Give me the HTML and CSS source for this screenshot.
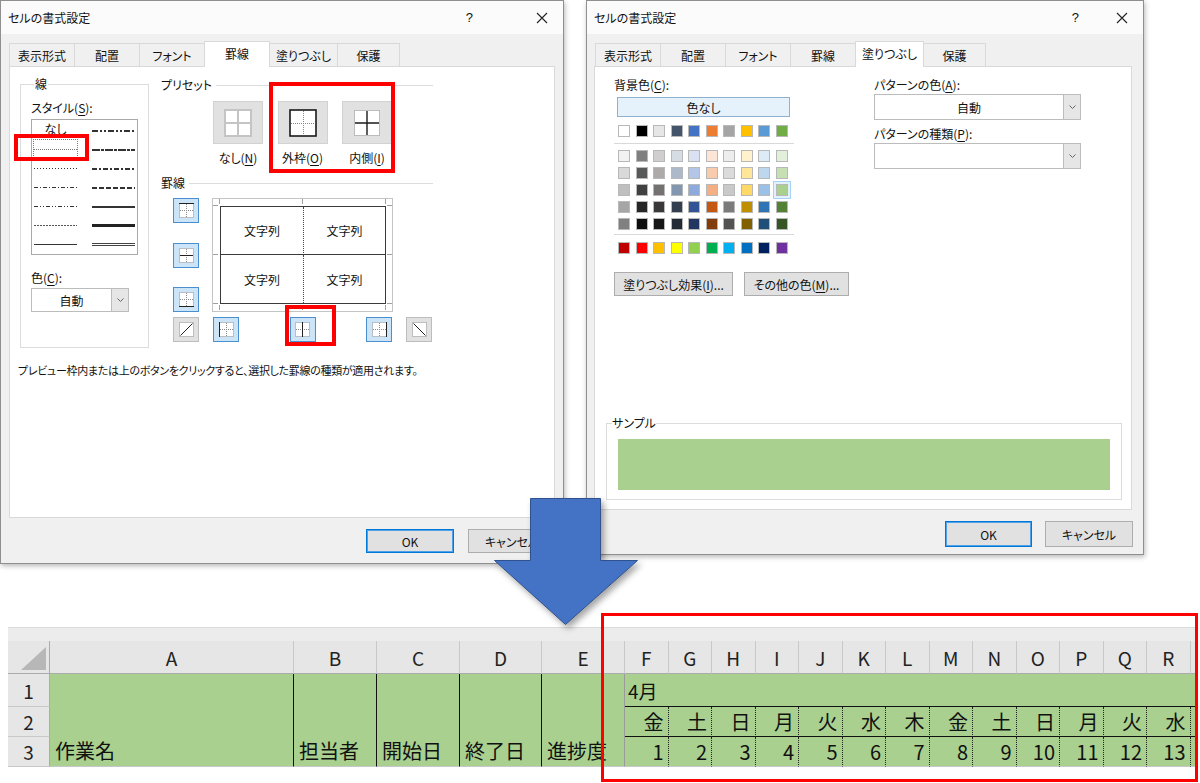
FILE: index.html
```html
<!DOCTYPE html>
<html lang="ja">
<head>
<meta charset="utf-8">
<title>セルの書式設定</title>
<link rel="stylesheet" href="styles.css">
</head>
<body>
<main class="canvas">

<!-- Left dialog: 罫線 tab -->
<section class="dialog dlg-left">
  <header class="titlebar">
    <span class="title">セルの書式設定</span>
    <span class="tb-help">?</span>
    <span class="tb-close"><svg width="12" height="12" viewBox="0 0 12 12"><path d="M1 1L11 11M11 1L1 11" stroke="#222" stroke-width="1.1"/></svg></span>
  </header>
  <nav class="tabs">
    <span class="tab">表示形式</span>
    <span class="tab">配置</span>
    <span class="tab">フォント</span>
    <span class="tab active">罫線</span>
    <span class="tab wide">塗りつぶし</span>
    <span class="tab narrow">保護</span>
  </nav>
  <div class="panel panel-border">
    <div class="border-body">
      <div class="group line-group">
        <span class="group-label">線</span>
        <div class="field-label style-label">スタイル(<u>S</u>):</div>
        <div class="style-list">
          <div class="style-item style-none">なし</div>
          <div class="style-item"><svg class="ls" viewBox="0 0 43 5"><line x1="0" y1="3" x2="43" y2="3" stroke="#333" stroke-width="2" stroke-dasharray="6 2 2 2 2 2"/></svg></div>
          <div class="style-item selected"><svg class="ls" viewBox="0 0 43 5"><line x1="0" y1="2.5" x2="43" y2="2.5" stroke="#777" stroke-dasharray="1 1"/></svg></div>
          <div class="style-item"><svg class="ls" viewBox="0 0 43 5"><line x1="0" y1="3" x2="43" y2="3" stroke="#333" stroke-width="2" stroke-dasharray="8 1 3 1"/></svg></div>
          <div class="style-item"><svg class="ls" viewBox="0 0 43 5"><line x1="0" y1="2.5" x2="43" y2="2.5" stroke="#333" stroke-dasharray="1 2"/></svg></div>
          <div class="style-item"><svg class="ls" viewBox="0 0 43 5"><line x1="0" y1="3" x2="43" y2="3" stroke="#333" stroke-width="2" stroke-dasharray="5 2 2 2"/></svg></div>
          <div class="style-item"><svg class="ls" viewBox="0 0 43 5"><line x1="0" y1="2.5" x2="43" y2="2.5" stroke="#333" stroke-dasharray="4 2 1 2"/></svg></div>
          <div class="style-item"><svg class="ls" viewBox="0 0 43 5"><line x1="0" y1="3" x2="43" y2="3" stroke="#333" stroke-width="2" stroke-dasharray="5 2"/></svg></div>
          <div class="style-item"><svg class="ls" viewBox="0 0 43 5"><line x1="0" y1="2.5" x2="43" y2="2.5" stroke="#333" stroke-dasharray="4 2 1 2 1 2"/></svg></div>
          <div class="style-item"><svg class="ls" viewBox="0 0 43 5"><line x1="0" y1="3" x2="43" y2="3" stroke="#333" stroke-width="2"/></svg></div>
          <div class="style-item"><svg class="ls" viewBox="0 0 43 5"><line x1="0" y1="2.5" x2="43" y2="2.5" stroke="#555" stroke-dasharray="2 1"/></svg></div>
          <div class="style-item"><svg class="ls" viewBox="0 0 43 5"><line x1="0" y1="2.5" x2="43" y2="2.5" stroke="#222" stroke-width="3"/></svg></div>
          <div class="style-item"><svg class="ls" viewBox="0 0 43 5"><line x1="0" y1="2.5" x2="43" y2="2.5" stroke="#333"/></svg></div>
          <div class="style-item"><svg class="ls" viewBox="0 0 43 5"><line x1="0" y1="1.5" x2="43" y2="1.5" stroke="#444"/><line x1="0" y1="3.5" x2="43" y2="3.5" stroke="#444"/></svg></div>
        </div>
        <div class="field-label color-label">色(<u>C</u>):</div>
        <div class="combo combo-small">
          <span class="combo-val">自動</span>
          <span class="combo-arrow"><svg width="7" height="4" viewBox="0 0 7 4"><path d="M0.5 0.5L3.5 3.5L6.5 0.5" fill="none" stroke="#666"/></svg></span>
        </div>
      </div>

      <div class="border-right">
        <div class="section-head"><span>プリセット</span></div>
        <div class="presets">
          <div class="preset">
            <span class="preset-btn"><svg width="28" height="28" viewBox="0 0 28 28"><rect x="1" y="1" width="26" height="26" fill="#fff" stroke="#c4c4c4" stroke-width="2"/><path d="M14 1V27M1 14H27" stroke="#c4c4c4" stroke-width="2"/></svg></span>
            <span class="preset-label">なし(<u>N</u>)</span>
          </div>
          <div class="preset">
            <span class="preset-btn"><svg width="28" height="28" viewBox="0 0 28 28"><rect x="1" y="1" width="26" height="26" fill="#fff" stroke="#1a1a1a" stroke-width="1.6"/><path d="M14.5 2V26M2 14.5H26" stroke="#888" stroke-dasharray="1 1"/></svg></span>
            <span class="preset-label">外枠(<u>O</u>)</span>
          </div>
          <div class="preset">
            <span class="preset-btn"><svg width="28" height="28" viewBox="0 0 28 28"><rect x="1.5" y="1.5" width="25" height="25" fill="#fff" stroke="#888" stroke-dasharray="1 1"/><path d="M14 2V26M2 14H26" stroke="#1a1a1a" stroke-width="1.4"/></svg></span>
            <span class="preset-label">内側(<u>I</u>)</span>
          </div>
        </div>

        <div class="section-head head-border"><span>罫線</span></div>
        <div class="editor">
          <div class="side-btns">
            <span class="bb on"><svg width="15" height="15" viewBox="0 0 15 15"><rect x="0.5" y="0.5" width="14" height="14" fill="#fff" stroke="#8c8c8c" stroke-dasharray="1 1"/><path d="M7.5 1V14M1 7.5H14" stroke="#8c8c8c" stroke-dasharray="1 1"/><path d="M0 0.5H15" stroke="#222"/></svg></span>
            <span class="bb on"><svg width="15" height="15" viewBox="0 0 15 15"><rect x="0.5" y="0.5" width="14" height="14" fill="#fff" stroke="#8c8c8c" stroke-dasharray="1 1"/><path d="M7.5 1V14" stroke="#8c8c8c" stroke-dasharray="1 1"/><path d="M1 7.5H14" stroke="#222"/></svg></span>
            <span class="bb on"><svg width="15" height="15" viewBox="0 0 15 15"><rect x="0.5" y="0.5" width="14" height="14" fill="#fff" stroke="#8c8c8c" stroke-dasharray="1 1"/><path d="M7.5 1V14M1 7.5H14" stroke="#8c8c8c" stroke-dasharray="1 1"/><path d="M0 14.5H15" stroke="#222"/></svg></span>
          </div>
          <div class="preview">
            <svg class="ticks" width="181" height="114" viewBox="0 0 181 114"><path d="M7.5 1V6M90.5 1V6M173.5 1V6M7.5 107V112M90.5 107V112M173.5 107V112M1 7.5H6M1 56.5H6M1 105.5H6M175 7.5H180M175 56.5H180M175 105.5H180" stroke="#a0a0a0"/></svg>
            <div class="pv-grid">
              <span class="pv-cell c1">文字列</span>
              <span class="pv-cell c2">文字列</span>
              <span class="pv-cell c3">文字列</span>
              <span class="pv-cell c4">文字列</span>
            </div>
          </div>
        </div>
        <div class="bottom-btns">
          <div class="bgroup">
            <span class="bb off"><svg width="15" height="15" viewBox="0 0 15 15"><rect x="0.5" y="0.5" width="14" height="14" fill="#fff" stroke="#8c8c8c" stroke-dasharray="1 1"/><path d="M1.5 13.5L13.5 1.5" stroke="#222"/></svg></span>
            <span class="bb on"><svg width="15" height="15" viewBox="0 0 15 15"><rect x="0.5" y="0.5" width="14" height="14" fill="#fff" stroke="#8c8c8c" stroke-dasharray="1 1"/><path d="M7.5 1V14M1 7.5H14" stroke="#8c8c8c" stroke-dasharray="1 1"/><path d="M0.5 0V15" stroke="#222"/></svg></span>
          </div>
          <span class="bb on"><svg width="15" height="15" viewBox="0 0 15 15"><rect x="0.5" y="0.5" width="14" height="14" fill="#fff" stroke="#8c8c8c" stroke-dasharray="1 1"/><path d="M1 7.5H14" stroke="#8c8c8c" stroke-dasharray="1 1"/><path d="M7.5 0V15" stroke="#222"/></svg></span>
          <div class="bgroup">
            <span class="bb on"><svg width="15" height="15" viewBox="0 0 15 15"><rect x="0.5" y="0.5" width="14" height="14" fill="#fff" stroke="#8c8c8c" stroke-dasharray="1 1"/><path d="M7.5 1V14M1 7.5H14" stroke="#8c8c8c" stroke-dasharray="1 1"/><path d="M14.5 0V15" stroke="#222"/></svg></span>
            <span class="bb off"><svg width="15" height="15" viewBox="0 0 15 15"><rect x="0.5" y="0.5" width="14" height="14" fill="#fff" stroke="#8c8c8c" stroke-dasharray="1 1"/><path d="M1.5 1.5L13.5 13.5" stroke="#222"/></svg></span>
          </div>
        </div>
      </div>
    </div>
    <p class="hint">プレビュー枠内または上のボタンをクリックすると、選択した罫線の種類が適用されます。</p>
  </div>
  <footer class="footer">
    <span class="btn btn-default">OK</span>
    <span class="btn">キャンセル</span>
  </footer>
  <div class="hl hl-style"></div>
  <div class="hl hl-preset"></div>
  <div class="hl hl-center"></div>
</section>

<!-- Right dialog: 塗りつぶし tab -->
<section class="dialog dlg-right">
  <header class="titlebar">
    <span class="title">セルの書式設定</span>
    <span class="tb-help">?</span>
    <span class="tb-close"><svg width="12" height="12" viewBox="0 0 12 12"><path d="M1 1L11 11M11 1L1 11" stroke="#222" stroke-width="1.1"/></svg></span>
  </header>
  <nav class="tabs">
    <span class="tab">表示形式</span>
    <span class="tab">配置</span>
    <span class="tab">フォント</span>
    <span class="tab">罫線</span>
    <span class="tab wide active">塗りつぶし</span>
    <span class="tab narrow">保護</span>
  </nav>
  <div class="panel panel-fill">
    <div class="fill-body">
      <div class="fill-left">
        <div class="field-label">背景色(<u>C</u>):</div>
        <span class="nocolor">色なし</span>
        <div class="swatches theme-row">
          <span class="sw" style="background:#FFFFFF"></span><span class="sw" style="background:#000000"></span><span class="sw" style="background:#E7E6E6"></span><span class="sw" style="background:#44546A"></span><span class="sw" style="background:#4472C4"></span><span class="sw" style="background:#ED7D31"></span><span class="sw" style="background:#A5A5A5"></span><span class="sw" style="background:#FFC000"></span><span class="sw" style="background:#5B9BD5"></span><span class="sw" style="background:#70AD47"></span>
        </div>
        <hr class="sep sep1">
        <div class="swatches tint-grid">
          <span class="sw" style="background:#F2F2F2"></span><span class="sw" style="background:#7F7F7F"></span><span class="sw" style="background:#D0CECE"></span><span class="sw" style="background:#D6DCE4"></span><span class="sw" style="background:#D9E1F2"></span><span class="sw" style="background:#FCE4D6"></span><span class="sw" style="background:#EDEDED"></span><span class="sw" style="background:#FFF2CC"></span><span class="sw" style="background:#DDEBF7"></span><span class="sw" style="background:#E2EFDA"></span>
          <span class="sw" style="background:#D9D9D9"></span><span class="sw" style="background:#595959"></span><span class="sw" style="background:#AEAAAA"></span><span class="sw" style="background:#ACB9CA"></span><span class="sw" style="background:#B4C6E7"></span><span class="sw" style="background:#F8CBAD"></span><span class="sw" style="background:#DBDBDB"></span><span class="sw" style="background:#FFE699"></span><span class="sw" style="background:#BDD7EE"></span><span class="sw" style="background:#C6E0B4"></span>
          <span class="sw" style="background:#BFBFBF"></span><span class="sw" style="background:#404040"></span><span class="sw" style="background:#757171"></span><span class="sw" style="background:#8497B0"></span><span class="sw" style="background:#8EA9DB"></span><span class="sw" style="background:#F4B084"></span><span class="sw" style="background:#C9C9C9"></span><span class="sw" style="background:#FFD966"></span><span class="sw" style="background:#9BC2E6"></span><span class="sw sw-selected" style="background:#A9D08E"></span>
          <span class="sw" style="background:#A6A6A6"></span><span class="sw" style="background:#262626"></span><span class="sw" style="background:#3A3838"></span><span class="sw" style="background:#333F4F"></span><span class="sw" style="background:#305496"></span><span class="sw" style="background:#C65911"></span><span class="sw" style="background:#7B7B7B"></span><span class="sw" style="background:#BF8F00"></span><span class="sw" style="background:#2F75B5"></span><span class="sw" style="background:#548235"></span>
          <span class="sw" style="background:#808080"></span><span class="sw" style="background:#0D0D0D"></span><span class="sw" style="background:#161616"></span><span class="sw" style="background:#222B35"></span><span class="sw" style="background:#203764"></span><span class="sw" style="background:#833C0C"></span><span class="sw" style="background:#525252"></span><span class="sw" style="background:#806000"></span><span class="sw" style="background:#1F4E78"></span><span class="sw" style="background:#375623"></span>
        </div>
        <hr class="sep sep2">
        <div class="swatches std-row">
          <span class="sw" style="background:#C00000"></span><span class="sw" style="background:#FF0000"></span><span class="sw" style="background:#FFC000"></span><span class="sw" style="background:#FFFF00"></span><span class="sw" style="background:#92D050"></span><span class="sw" style="background:#00B050"></span><span class="sw" style="background:#00B0F0"></span><span class="sw" style="background:#0070C0"></span><span class="sw" style="background:#002060"></span><span class="sw" style="background:#7030A0"></span>
        </div>
        <div class="fill-btns">
          <span class="btn btn-effect">塗りつぶし効果(<u>I</u>)...</span>
          <span class="btn btn-more">その他の色(<u>M</u>)...</span>
        </div>
      </div>
      <div class="fill-right">
        <div class="field-label">パターンの色(<u>A</u>):</div>
        <div class="combo combo-wide">
          <span class="combo-val">自動</span>
          <span class="combo-arrow"><svg width="7" height="4" viewBox="0 0 7 4"><path d="M0.5 0.5L3.5 3.5L6.5 0.5" fill="none" stroke="#666"/></svg></span>
        </div>
        <div class="field-label pattern-label">パターンの種類(<u>P</u>):</div>
        <div class="combo combo-wide">
          <span class="combo-val"></span>
          <span class="combo-arrow"><svg width="7" height="4" viewBox="0 0 7 4"><path d="M0.5 0.5L3.5 3.5L6.5 0.5" fill="none" stroke="#666"/></svg></span>
        </div>
      </div>
    </div>
    <div class="sample-group">
      <span class="group-label sample-label">サンプル</span>
      <div class="sample-fill"></div>
    </div>
  </div>
  <footer class="footer">
    <span class="btn btn-default btn-tall">OK</span>
    <span class="btn btn-tall">キャンセル</span>
  </footer>
</section>

<!-- Spreadsheet result -->
<section class="sheet">
  <div class="sheet-band"></div>
  <div class="sheet-grid">
    <div class="corner"><svg width="25" height="23" viewBox="0 0 25 23"><polygon points="25,0 25,23 0,23" fill="#b7b7b7"/></svg></div>
    <div class="colh">A</div><div class="colh">B</div><div class="colh">C</div><div class="colh">D</div><div class="colh">E</div>
    <div class="colh">F</div><div class="colh">G</div><div class="colh">H</div><div class="colh">I</div><div class="colh">J</div><div class="colh">K</div><div class="colh">L</div><div class="colh">M</div><div class="colh">N</div><div class="colh">O</div><div class="colh">P</div><div class="colh">Q</div><div class="colh">R</div><div class="colh colh-s"></div>

    <div class="rowh rowh-1">1</div>
    <div class="cell head bl">作業名</div>
    <div class="cell head bl">担当者</div>
    <div class="cell head bl">開始日</div>
    <div class="cell head bl">終了日</div>
    <div class="cell head eg">進捗度</div>
    <div class="cell month">4月</div>

    <div class="rowh">2</div>
    <div class="cell day">金</div><div class="cell day">土</div><div class="cell day">日</div><div class="cell day">月</div><div class="cell day">火</div><div class="cell day">水</div><div class="cell day">木</div><div class="cell day">金</div><div class="cell day">土</div><div class="cell day">日</div><div class="cell day">月</div><div class="cell day">火</div><div class="cell day">水</div><div class="cell day day-s"></div>

    <div class="rowh">3</div>
    <div class="cell num">1</div><div class="cell num">2</div><div class="cell num">3</div><div class="cell num">4</div><div class="cell num">5</div><div class="cell num">6</div><div class="cell num">7</div><div class="cell num">8</div><div class="cell num">9</div><div class="cell num">10</div><div class="cell num">11</div><div class="cell num">12</div><div class="cell num">13</div><div class="cell num num-s"></div>
  </div>
</section>

<svg class="arrow" width="155" height="140" viewBox="0 0 155 140"><polygon points="40.5,4.5 110.5,4.5 110.5,66.5 147.5,66.5 75.5,130.5 4.5,66.5 40.5,66.5" fill="#4472c4" stroke="#2f528f" stroke-width="1"/></svg>

<div class="hl hl-sheet"></div>

</main>
</body>
</html>
```

FILE: styles.css
```css
* { box-sizing: border-box; }

html, body {
  margin: 0;
  padding: 0;
}

body {
  width: 1200px;
  height: 783px;
  overflow: hidden;
  background: #fff;
  font-family: "Noto Sans CJK JP", "Noto Sans", sans-serif;
  font-size: 12px;
  color: #111;
  font-feature-settings: "palt";
}

u { text-decoration: underline; text-underline-offset: 2px; }

.canvas {
  position: relative;
  width: 1200px;
  height: 783px;
}

/* ---------- dialogs ---------- */
.dialog {
  position: absolute;
  top: 0;
  background: #f0f0f0;
  border: 1px solid #8f8f8f;
  box-shadow: 1px 2px 5px rgba(0, 0, 0, 0.28);
  display: flex;
  flex-direction: column;
}

.dlg-left { left: 0; width: 564px; height: 564px; }
.dlg-right { left: 586px; width: 558px; height: 555px; }

.titlebar {
  height: 33px;
  flex: none;
  background: #fbfbfb;
  display: flex;
  align-items: center;
  padding-left: 7px;
  line-height: 16px;
}

.tb-help { margin-left: auto; font-size: 13px; font-family: "Liberation Sans", sans-serif; }
.tb-close { display: flex; margin-right: 15px; }
.dlg-left .tb-close { margin-left: 63px; }
.dlg-right .tb-close { margin-left: 37px; }

.tabs {
  flex: none;
  margin-top: 9px;
  height: 23px;
  padding-left: 8px;
  display: flex;
  align-items: flex-end;
}

.tab {
  width: 66px;
  height: 23px;
  border: 1px solid #d9d9d9;
  border-bottom: none;
  margin-right: -1px;
  background: #f0f0f0;
  display: flex;
  align-items: center;
  justify-content: center;
  font-size: 12px;
  white-space: nowrap;
}
.tab.wide { width: 69px; }
.tab.narrow { width: 63px; }
.tab.active {
  position: relative;
  z-index: 2;
  height: 26px;
  margin-bottom: -1px;
  background: #fff;
  padding-bottom: 2px;
}

.panel {
  flex: none;
  background: #fff;
  border: 1px solid #d9d9d9;
  display: flex;
  flex-direction: column;
}
.panel-border { width: 546px; height: 452px; margin-left: 8px; }
.panel-fill { width: 538px; height: 444px; margin-left: 7px; }

.footer {
  display: flex;
  justify-content: flex-end;
  gap: 14px;
  padding-top: 11px;
}
.dlg-left .footer { padding-right: 7px; }
.dlg-right .footer { padding-right: 10px; gap: 13px; }

.btn {
  flex: none;
  display: flex;
  align-items: center;
  justify-content: center;
  height: 24px;
  width: 88px;
  background: #e1e1e1;
  border: 1px solid #adadad;
  font-size: 12px;
  white-space: nowrap;
}
.btn-tall { height: 26px; }
.dlg-right .btn-default { width: 87px; }
.btn-default {
  border: 1px solid #0078d7;
  box-shadow: inset 0 0 0 1px #4fa0e6;
}

.field-label { line-height: 16px; height: 16px; white-space: nowrap; }

/* ---------- border tab ---------- */
.border-body {
  display: flex;
  align-items: flex-start;
}

.group {
  border: 1px solid #dcdcdc;
}
.group-label {
  display: block;
  width: fit-content;
  background: #fff;
  line-height: 16px;
  margin-top: -9px;
  padding: 0 1px;
}

.line-group {
  margin-top: 17px;
  margin-left: 10px;
  width: 129px;
  height: 264px;
  padding-left: 10px;
}
.line-group .group-label { margin-left: 3px; }
.style-label { margin-top: 8px; }

.style-list {
  margin-top: 3px;
  width: 107px;
  height: 136px;
  border: 1px solid #a9a9a9;
  background: #fff;
  padding: 1px 2px 0;
  display: grid;
  grid-template-columns: 43px 43px;
  grid-auto-rows: 19px;
  column-gap: 15px;
}
.style-item {
  display: flex;
  align-items: center;
  justify-content: center;
}
.style-item .ls { width: 43px; height: 5px; display: block; }
.style-none { font-size: 12px; line-height: 14px; align-items: flex-start; padding-top: 1px; }
.style-item.selected { outline: 1px dotted #7a7a7a; }

.color-label { margin-top: 15px; }

.combo {
  display: flex;
  height: 24px;
  background: #fff;
  border: 1px solid #bcbcbc;
}
.combo-val {
  flex: 1;
  display: flex;
  align-items: center;
  justify-content: center;
}
.combo-arrow {
  width: 17px;
  background: #e6e6e6;
  border-left: 1px solid #bcbcbc;
  display: flex;
  align-items: center;
  justify-content: center;
}
.combo-small { margin-top: 2px; width: 98px; }
.combo-wide { margin-top: 1px; width: 207px; height: 26px; }

.border-right {
  margin-top: 11px;
  margin-left: 12px;
  width: 272px;
}

.section-head {
  display: flex;
  align-items: center;
  gap: 4px;
  height: 14px;
  line-height: 14px;
}
.section-head::after {
  content: "";
  flex: 1;
  border-top: 1px solid #dcdcdc;
}
.head-border { margin-top: 11px; }

.presets {
  margin-top: 9px;
  padding-left: 52px;
  display: flex;
  gap: 14.5px;
}
.preset {
  width: 50px;
  display: flex;
  flex-direction: column;
  align-items: center;
}
.preset-btn {
  width: 50px;
  height: 43px;
  background: #e1e1e1;
  border: 1px solid #d2d2d2;
  display: flex;
  align-items: center;
  justify-content: center;
}
.preset-label {
  margin-top: 7px;
  line-height: 14px;
  white-space: nowrap;
}

.editor {
  margin-top: 8px;
  padding-left: 12px;
  display: grid;
  grid-template-columns: 26px 181px;
  column-gap: 13px;
  height: 114px;
}
.side-btns {
  display: flex;
  flex-direction: column;
  justify-content: space-between;
}

.bb {
  width: 26px;
  height: 25px;
  display: flex;
  align-items: center;
  justify-content: center;
}
.bb.on { background: #cce4f7; border: 1px solid #4a8fd0; }
.bb.off { background: #e1e1e1; border: 1px solid #bdbdbd; }

.preview {
  position: relative;
  background: #fff;
  border: 1px solid #c4c4c4;
  padding: 7px 6px 0 7px;
}
.ticks { position: absolute; left: -1px; top: -1px; }
.pv-grid {
  position: relative;
  width: 166px;
  height: 98px;
  border: 1px solid #3a3a3a;
  display: grid;
  grid-template-columns: 83px 1fr;
  grid-template-rows: 48px 1fr;
}
.pv-cell {
  display: flex;
  align-items: center;
  justify-content: center;
  font-size: 12px;
}
.pv-cell.c1 { border-right: 1px dotted #444; border-bottom: 1px solid #3a3a3a; }
.pv-cell.c2 { border-bottom: 1px solid #3a3a3a; }
.pv-cell.c3 { border-right: 1px dotted #444; }

.bottom-btns {
  margin-top: 5px;
  margin-left: 12px;
  width: 259px;
  display: flex;
  justify-content: space-between;
}
.bgroup { display: flex; gap: 14px; }

.hint {
  margin: 14px 0 0 8px;
  line-height: 16px;
  font-size: 11px;
  letter-spacing: -0.3px;
  white-space: nowrap;
}

/* highlight overlays */
.hl {
  position: absolute;
  border: 4px solid #ff0000;
  z-index: 5;
}
.hl-style { left: 13px; top: 133px; width: 75px; height: 27px; }
.hl-preset { left: 268px; top: 81px; width: 126px; height: 91px; }
.hl-center { left: 284px; top: 304px; width: 51px; height: 41px; }
.hl-sheet { left: 601px; top: 613px; width: 597px; height: 169px; border-width: 3px; }

/* ---------- fill tab ---------- */
.fill-body {
  display: flex;
  padding: 10px 0 0 19px;
}
.fill-left { width: 180px; flex: none; }
.fill-right { width: 207px; margin-left: 80px; flex: none; }
.pattern-label { margin-top: 6px; }

.nocolor {
  display: flex;
  align-items: center;
  justify-content: center;
  margin: 4px 0 0 3px;
  width: 173px;
  height: 20px;
  background: #e5f1fb;
  border: 1px solid #8fb0cf;
}

.swatches {
  display: grid;
  grid-template-columns: repeat(10, 12px);
  grid-auto-rows: 12px;
  column-gap: 5.5px;
  row-gap: 5px;
  padding-left: 4px;
}
.theme-row { margin-top: 8px; }
.tint-grid { margin-top: 6px; }
.std-row { margin-top: 7px; }
.sw { border: 1px solid #b8b8b8; }
.sw-selected {
  outline: 1px solid #a6d2f5;
  outline-offset: 2px;
  box-shadow: 0 0 0 2px #e3f1fc;
}

.sep {
  margin: 6px 0 0;
  border: none;
  border-top: 1px solid #d9d9d9;
  height: 0;
}
.sep2 { margin-top: 4px; }

.fill-btns {
  margin-top: 18px;
  display: flex;
  gap: 11px;
}
.btn-effect { width: 119px; }
.btn-more { width: 105px; }

.sample-group {
  margin: auto 0 9px 11px;
  width: 516px;
  height: 77px;
  border: 1px solid #dcdcdc;
}
.sample-label { margin-left: 5px; padding: 0; }
.sample-fill {
  margin: 8px 0 0 11px;
  width: 492px;
  height: 51px;
  background: #a9d08e;
}

/* ---------- spreadsheet ---------- */
.sheet {
  position: absolute;
  left: 8px;
  top: 627px;
  width: 1188px;
}
.sheet-band {
  height: 14px;
  background: #ececec;
  border-top: 1px solid #dadada;
}
.sheet-grid {
  display: grid;
  grid-template-columns: 42px 244px 83px 83px 82px 83px repeat(13, 43.5px) 5.5px;
  grid-template-rows: 33px 33px 30px 30px;
  font-size: 20px;
  color: #111;
  font-feature-settings: normal;
}
.corner {
  background: #e6e6e6;
  border-right: 1px solid #ababab;
  border-bottom: 1px solid #ababab;
  display: flex;
  align-items: flex-end;
  justify-content: flex-end;
  padding: 0 3px 3px 0;
}
.colh {
  background: #e6e6e6;
  border-right: 1px solid #c8c8c8;
  border-bottom: 1px solid #ababab;
  display: flex;
  align-items: center;
  justify-content: center;
  font-size: 19px;
  line-height: 1;
  color: #222;
}
.colh-s { border-right: none; }
.rowh {
  background: #e6e6e6;
  border-right: 1px solid #ababab;
  border-bottom: 1px solid #c8c8c8;
  display: flex;
  align-items: center;
  justify-content: center;
  font-size: 19px;
  line-height: 1;
  color: #222;
}
.cell {
  background: #a9d08e;
  display: flex;
  align-items: center;
  line-height: 1;
  white-space: nowrap;
  overflow: hidden;
}
.cell.head {
  grid-row: span 3;
  align-items: flex-end;
  padding: 0 0 5px 5px;
  border-bottom: 1px solid #c8c8c8;
}
.cell.bl { border-right: 1px solid #111; }
.cell.eg { border-right: 1px solid #9a9a9a; }
.cell.month {
  grid-column: span 14;
  padding-left: 3px;
  border-bottom: 1px solid #111;
  font-size: 19px;
}
.cell.day, .cell.num {
  justify-content: flex-end;
  padding-right: 4px;
  border-right: 1px dotted #222;
}
.cell.day { border-bottom: 1px solid #111; }
.cell.num { border-bottom: 1px solid #c8c8c8; }
.cell.day-s, .cell.num-s { border-right: none; padding: 0; }

/* ---------- arrow ---------- */
.arrow {
  position: absolute;
  left: 490px;
  top: 494px;
  z-index: 6;
  filter: drop-shadow(3px 4px 3px rgba(0, 0, 0, 0.35));
}
```
